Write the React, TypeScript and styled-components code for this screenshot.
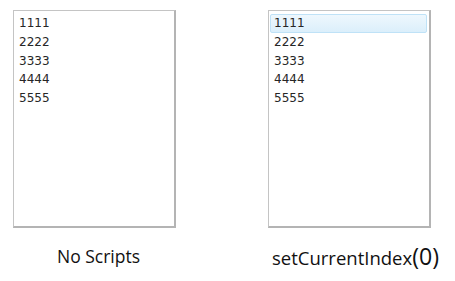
import React from "react";
import styled, { createGlobalStyle } from "styled-components";

const Global = createGlobalStyle`
  html, body { margin: 0; padding: 0; background: #ffffff; }
  body { width: 455px; height: 281px; overflow: hidden; }
`;

const Page = styled.div`
  display: flex;
  gap: 92px;
  padding: 10px 0 0 13px;
`;

const Column = styled.div`
  display: flex;
  flex-direction: column;
  align-items: center;
  width: 163px;
`;

const ListBox = styled.div`
  box-sizing: border-box;
  width: 163px;
  height: 218px;
  border-top: 1px solid #c4c4c4;
  border-left: 1px solid #c4c4c4;
  border-right: 2px solid #b4b4b4;
  border-bottom: 2px solid #b4b4b4;
  padding: 3px 2px 0 1px;
  display: flex;
  flex-direction: column;
  background: #fff;
`;

const Item = styled.div<{ $selected?: boolean }>`
  box-sizing: border-box;
  height: 18.7px;
  display: flex;
  align-items: center;
  padding-left: 3px;
  font-family: "DejaVu Sans", Tahoma, sans-serif;
  font-size: 12px;
  color: #262626;
  border: 1px solid ${(p) => (p.$selected ? "#bfe2f7" : "transparent")};
  border-radius: 2px;
  background: ${(p) =>
    p.$selected ? "linear-gradient(#eef7fd, #dbeffb)" : "transparent"};
`;

const Caption = styled.div<{ $shift: number; $size: number }>`
  margin-top: 16px;
  padding-left: ${(p) => p.$shift}px;
  font-family: "Open Sans", sans-serif;
  font-size: ${(p) => p.$size}px;
  line-height: 24px;
  color: #111;
  white-space: nowrap;
`;

const Paren = styled.span`
  font-size: 1.25em;
`;

const items = ["1111", "2222", "3333", "4444", "5555"];

export default function App() {
  return (
    <>
      <Global />
      <Page>
        <Column>
          <ListBox>
            {items.map((t) => (
              <Item key={t}>{t}</Item>
            ))}
          </ListBox>
          <Caption $shift={8} $size={17.5}>
            No Scripts
          </Caption>
        </Column>
        <Column>
          <ListBox>
            {items.map((t, i) => (
              <Item key={t} $selected={i === 0}>
                {t}
              </Item>
            ))}
          </ListBox>
          <Caption $shift={12} $size={18.5}>
            setCurrentIndex<Paren>(0)</Paren>
          </Caption>
        </Column>
      </Page>
    </>
  );
}
